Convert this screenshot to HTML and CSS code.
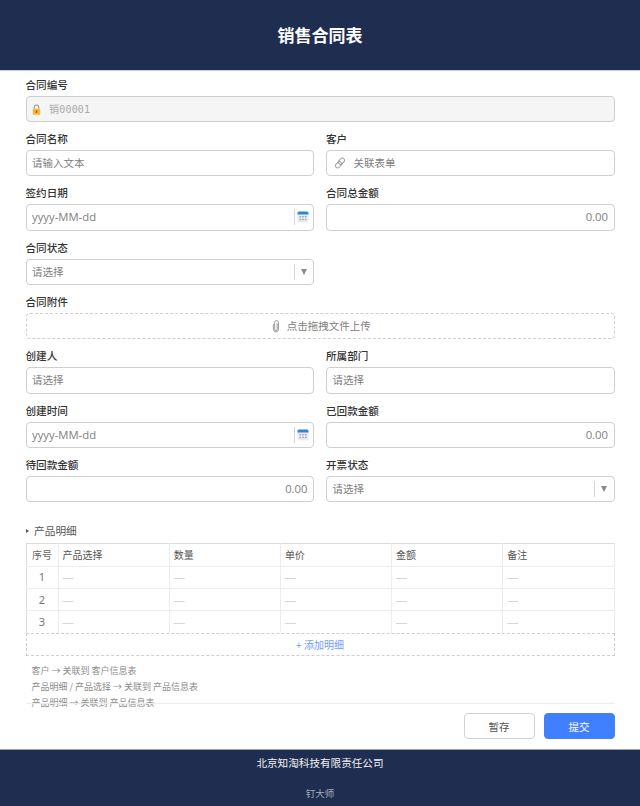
FILE: index.html
```html
<!DOCTYPE html>
<html lang="zh">
<head>
<meta charset="utf-8">
<title>销售合同表</title>
<link rel="stylesheet" href="styles.css">
</head>
<body>
<div class="page">
  <header class="top"><h1>销售合同表</h1></header>
  <main class="form">
    <div class="grid">
      <div class="field full">
        <label>合同编号</label>
        <div class="box locked">
          <svg class="lock" viewBox="0 0 12 14" width="9" height="11"><path d="M3 6V4a3 3 0 0 1 6 0v2" fill="none" stroke="#9a9a9a" stroke-width="1.4"/><rect x="1" y="6" width="10" height="8" rx="1.2" fill="#f7b733"/><rect x="5" y="8.5" width="2" height="3" fill="#7a5a10"/></svg>
          <span class="serial">销00001</span>
        </div>
      </div>
      <div class="field">
        <label>合同名称</label>
        <div class="box"><span class="ph">请输入文本</span></div>
      </div>
      <div class="field">
        <label>客户</label>
        <div class="box">
          <svg class="link" viewBox="0 0 14 14" width="12" height="12"><g fill="none" stroke="#9b9b9b" stroke-width="1.1"><rect x="6.2" y="0.9" width="5" height="8" rx="2.5" transform="rotate(45 8.7 4.9)"/><rect x="2.8" y="5.1" width="5" height="8" rx="2.5" transform="rotate(45 5.3 9.1)"/></g></svg>
          <span class="ph">关联表单</span>
        </div>
      </div>
      <div class="field">
        <label>签约日期</label>
        <div class="box">
          <span class="ph latin">yyyy-MM-dd</span>
          <span class="suffix">
            <svg viewBox="0 0 12 12" width="12" height="12"><rect x="0.5" y="0.5" width="11" height="11" rx="1.5" fill="#e9edf1"/><path d="M0.5 2a1.5 1.5 0 0 1 1.5-1.5h8A1.5 1.5 0 0 1 11.5 2v1.5h-11z" fill="#2f86d6"/><g fill="#9aa3ab"><rect x="2.5" y="5" width="1.6" height="1.4"/><rect x="5.2" y="5" width="1.6" height="1.4"/><rect x="7.9" y="5" width="1.6" height="1.4"/><rect x="2.5" y="7.8" width="1.6" height="1.4"/><rect x="5.2" y="7.8" width="1.6" height="1.4"/><rect x="7.9" y="7.8" width="1.6" height="1.4"/></g></svg>
          </span>
        </div>
      </div>
      <div class="field">
        <label>合同总金额</label>
        <div class="box end"><span class="ph latin">0.00</span></div>
      </div>
      <div class="field">
        <label>合同状态</label>
        <div class="box">
          <span class="ph">请选择</span>
          <span class="suffix"><i class="caret"></i></span>
        </div>
      </div>
      <div class="field empty"></div>
      <div class="field full">
        <label>合同附件</label>
        <div class="box upload">
          <svg viewBox="0 0 10 16" width="8" height="13"><path d="M6.5 4v7.5a1.6 1.6 0 0 1-3.2 0V3a2.4 2.4 0 0 1 4.8 0v8.5a3.2 3.2 0 0 1-6.4 0V5" fill="none" stroke="#8f8f8f" stroke-width="1.1"/></svg>
          <span class="ph">点击拖拽文件上传</span>
        </div>
      </div>
      <div class="field">
        <label>创建人</label>
        <div class="box"><span class="ph">请选择</span></div>
      </div>
      <div class="field">
        <label>所属部门</label>
        <div class="box"><span class="ph">请选择</span></div>
      </div>
      <div class="field">
        <label>创建时间</label>
        <div class="box">
          <span class="ph latin">yyyy-MM-dd</span>
          <span class="suffix">
            <svg viewBox="0 0 12 12" width="12" height="12"><rect x="0.5" y="0.5" width="11" height="11" rx="1.5" fill="#e9edf1"/><path d="M0.5 2a1.5 1.5 0 0 1 1.5-1.5h8A1.5 1.5 0 0 1 11.5 2v1.5h-11z" fill="#2f86d6"/><g fill="#9aa3ab"><rect x="2.5" y="5" width="1.6" height="1.4"/><rect x="5.2" y="5" width="1.6" height="1.4"/><rect x="7.9" y="5" width="1.6" height="1.4"/><rect x="2.5" y="7.8" width="1.6" height="1.4"/><rect x="5.2" y="7.8" width="1.6" height="1.4"/><rect x="7.9" y="7.8" width="1.6" height="1.4"/></g></svg>
          </span>
        </div>
      </div>
      <div class="field">
        <label>已回款金额</label>
        <div class="box end"><span class="ph latin">0.00</span></div>
      </div>
      <div class="field">
        <label>待回款金额</label>
        <div class="box end"><span class="ph latin">0.00</span></div>
      </div>
      <div class="field">
        <label>开票状态</label>
        <div class="box">
          <span class="ph">请选择</span>
          <span class="suffix"><i class="caret"></i></span>
        </div>
      </div>
    </div>

    <section class="detail">
      <div class="detail-title"><i class="tri"></i>产品明细</div>
      <table>
        <colgroup><col class="c0"><col><col><col><col><col></colgroup>
        <thead>
          <tr><th class="no">序号</th><th>产品选择</th><th>数量</th><th>单价</th><th>金额</th><th>备注</th></tr>
        </thead>
        <tbody>
          <tr><td class="no">1</td><td>—</td><td>—</td><td>—</td><td>—</td><td>—</td></tr>
          <tr><td class="no">2</td><td>—</td><td>—</td><td>—</td><td>—</td><td>—</td></tr>
          <tr><td class="no">3</td><td>—</td><td>—</td><td>—</td><td>—</td><td>—</td></tr>
        </tbody>
      </table>
      <div class="add">+ 添加明细</div>
    </section>

    <div class="notes">
      <p>客户 → 关联到 客户信息表</p>
      <p>产品明细 / 产品选择 → 关联到 产品信息表</p>
      <p>产品明细 → 关联到 产品信息表</p>
    </div>
    <div class="actions">
      <button class="btn">暂存</button>
      <button class="btn primary">提交</button>
    </div>
  </main>
  <footer class="bottom">
    <div class="company">北京知淘科技有限责任公司</div>
    <div class="brand">钉大师</div>
  </footer>
</div>
</body>
</html>
```

FILE: styles.css
```css
* { box-sizing: border-box; }
html, body { margin: 0; padding: 0; }
body {
  background: #fff;
  font-family: "Noto Sans CJK SC", "Noto Sans", sans-serif;
  color: #333;
}
.page {
  width: 640px;
  height: 806px;
  display: flex;
  flex-direction: column;
  overflow: hidden;
}
.top {
  height: 70.5px;
  flex: none;
  background: #1e2d50;
  border-bottom: 1px solid #c9d0dc;
  display: flex;
  align-items: center;
  justify-content: center;
}
.top h1 {
  margin: 0;
  font-size: 17px;
  line-height: 24px;
  font-weight: 700;
  color: #fff;
}
.form {
  flex: 1;
  padding: 0 25.5px;
  position: relative;
  min-height: 0;
}
.grid {
  display: grid;
  grid-template-columns: 1fr 1fr;
  column-gap: 12px;
}
.field { height: 54.35px; padding-top: 6px; }
.full { grid-column: 1 / -1; }
.field label {
  display: block;
  height: 19px;
  font-size: 10.6px;
  line-height: 15px;
  font-weight: 500;
  color: #333;
}
.box {
  height: 26.5px;
  border: 1px solid #cfcfcf;
  border-radius: 4px;
  display: flex;
  align-items: center;
  padding: 0 5.5px;
  font-size: 10.5px;
  background: #fff;
}
.ph { color: #808080; font-size: 10.5px; line-height: 16px; }
.latin { font-family: "Open Sans", "Noto Sans", sans-serif; font-size: 11.3px; }
.end { justify-content: flex-end; }
.locked { background: #f5f5f5; }
.lock { margin-right: 8px; margin-top: 2px; }
.serial {
  color: #a9a9a9;
  font-family: "DejaVu Sans Mono", "Noto Sans CJK SC", monospace;
  font-size: 10px;
  letter-spacing: 0.2px;
}
.link { margin-left: 1px; margin-right: 8px; }
.suffix {
  margin-left: auto;
  height: 16px;
  width: 15px;
  margin-right: -1px;
  border-left: 1px solid #d6d6d6;
  display: flex;
  align-items: center;
  justify-content: flex-end;
}
.caret {
  width: 0; height: 0;
  margin-right: 2px;
  border-left: 3.5px solid transparent;
  border-right: 3.5px solid transparent;
  border-top: 6px solid #8a8a8a;
}
.upload {
  justify-content: center;
  gap: 7px;
  padding-left: 8px;
  border: 1px dashed #cfcfcf;
}
.detail { margin-top: 17.5px; }
.detail-title {
  display: flex;
  align-items: center;
  height: 17px;
  font-size: 10.7px;
  line-height: 16px;
  color: #555;
  margin-bottom: 3.5px;
}
.tri {
  width: 0; height: 0;
  margin: 0 5px 0 0.5px;
  border-top: 2.5px solid transparent;
  border-bottom: 2.5px solid transparent;
  border-left: 3.5px solid #555;
}
table {
  width: 100%;
  border-collapse: collapse;
  table-layout: fixed;
  border: 1px solid #dcdcdc;
  font-size: 10px;
}
.c0 { width: 32px; }
th, td {
  height: 22.4px;
  padding: 0 4px;
  border-right: 1px solid #ececec;
  border-bottom: 1px solid #ececec;
  text-align: left;
  font-weight: 400;
  line-height: 14px;
}
th { color: #555; }
td { color: #cfcfcf; font-family: "Liberation Sans", sans-serif; font-size: 11px; }
th.no, td.no { text-align: center; color: #666; padding: 0; }
td.no { font-family: "Noto Sans", sans-serif; font-size: 11px; color: #777; }
.add {
  height: 23px;
  margin-top: -1px;
  border: 1px dashed #cfcfcf;
  display: flex;
  align-items: center;
  justify-content: center;
  font-size: 10px;
  color: #6f9eff;
  background: #fff;
  position: relative;
}
.notes { margin-top: 7px; padding-left: 6px; }
.notes p {
  margin: 0;
  font-size: 9px;
  line-height: 16.3px;
  color: #8c8c8c;
}
.actions {
  position: absolute;
  left: 25.5px;
  right: 25.5px;
  bottom: 0;
  height: 46px;
  border-top: 1px solid #ececec;
  display: flex;
  justify-content: flex-end;
  align-items: center;
  gap: 9px;
}
.btn {
  width: 71px;
  height: 26.5px;
  border: 1px solid #d2d2d2;
  border-radius: 4px;
  background: #fff;
  color: #555;
  font-family: inherit;
  font-size: 10.5px;
  padding: 0;
}
.primary {
  background: #4080ff;
  border-color: #4080ff;
  color: #fff;
}
.bottom {
  height: 57.5px;
  flex: none;
  background: #1e2d50;
  border-top: 1px solid #9aa0ad;
  text-align: center;
  padding-top: 5px;
}
.company { font-size: 10.6px; line-height: 16px; color: #f2f2f2; }
.brand { margin-top: 15px; font-size: 9.5px; line-height: 14px; color: #a8adb8; }
```
